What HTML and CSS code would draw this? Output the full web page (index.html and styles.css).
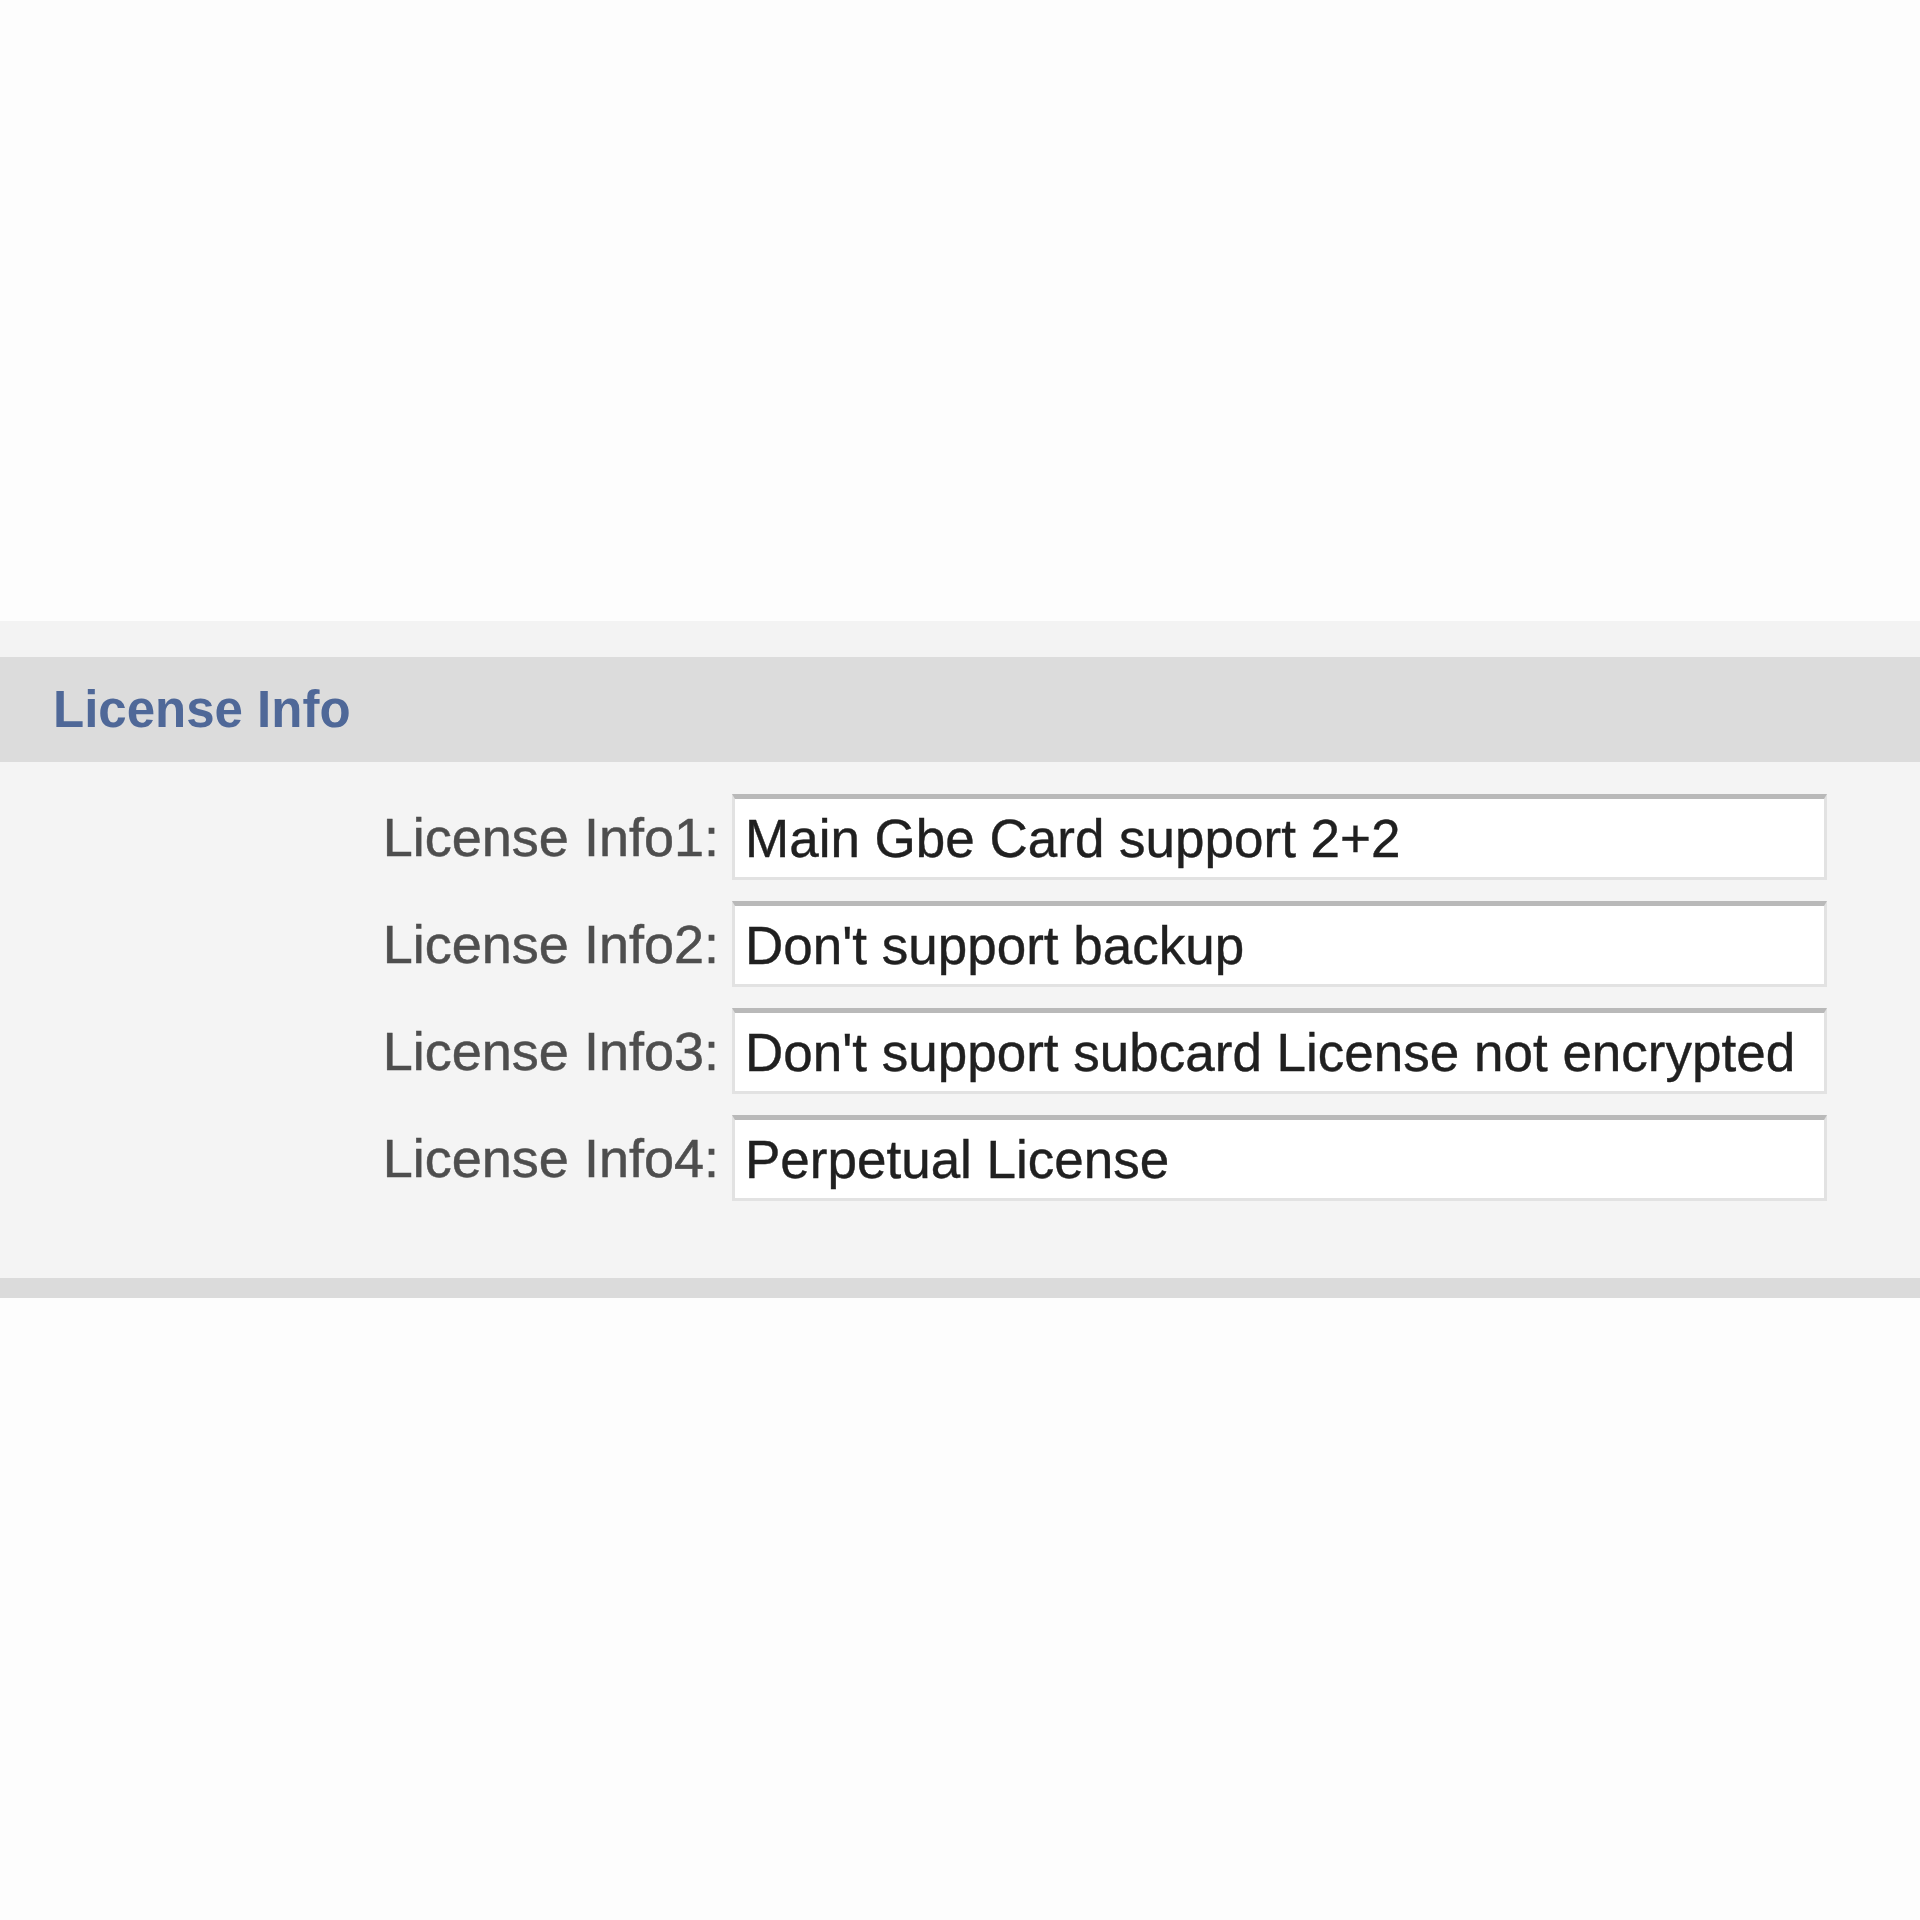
FILE: index.html
```html
<!DOCTYPE html>
<html>
<head>
<meta charset="utf-8">
<link rel="stylesheet" href="styles.css">
</head>
<body>
<section class="panel">
  <div class="panel-top"></div>
  <div class="panel-header"><h2 class="panel-title">License Info</h2></div>
  <div class="panel-body">
    <div class="form">
      <label class="field-label">License Info1:</label>
      <div class="field-input">Main Gbe Card support 2+2</div>
      <label class="field-label">License Info2:</label>
      <div class="field-input">Don't support backup</div>
      <label class="field-label">License Info3:</label>
      <div class="field-input">Don't support subcard License not encrypted</div>
      <label class="field-label">License Info4:</label>
      <div class="field-input">Perpetual License</div>
    </div>
  </div>
  <div class="panel-foot"></div>
</section>
</body>
</html>
```
FILE: styles.css
```css
html, body {
  margin: 0;
  padding: 0;
  background: #fdfdfd;
}
body {
  font-family: "Liberation Sans", Arial, sans-serif;
  padding-top: 621px;
  min-height: 1920px;
  box-sizing: border-box;
}
.panel {
  background: #f4f4f4;
}
.panel-top {
  height: 36px;
  background: #f3f3f3;
}
.panel-header {
  height: 105px;
  background: #dcdcdc;
  display: flex;
  align-items: center;
  padding-left: 53px;
}
.panel-title {
  margin: 0;
  font-size: 51px;
  font-weight: bold;
  color: #4f6898;
}
.panel-body {
  padding: 32px 0 77px 0;
}
.form {
  display: grid;
  grid-template-columns: 341px 1095px;
  column-gap: 13px;
  row-gap: 21px;
  margin-left: 378px;
  align-items: center;
}
.field-label {
  text-align: right;
  font-size: 54px;
  color: #4e4e4e;
  -webkit-text-stroke: 0.5px #4e4e4e;
  white-space: nowrap;
}
.field-input {
  box-sizing: border-box;
  height: 86px;
  background: #ffffff;
  border: 3px solid #e2e2e2;
  border-top: 5px solid #b9b9b9;
  padding: 0 10px;
  display: flex;
  align-items: center;
  font-size: 53px;
  color: #202020;
  -webkit-text-stroke: 0.4px #202020;
  white-space: nowrap;
  overflow: hidden;
}
.panel-foot {
  height: 20px;
  background: #dbdbdb;
}
```
